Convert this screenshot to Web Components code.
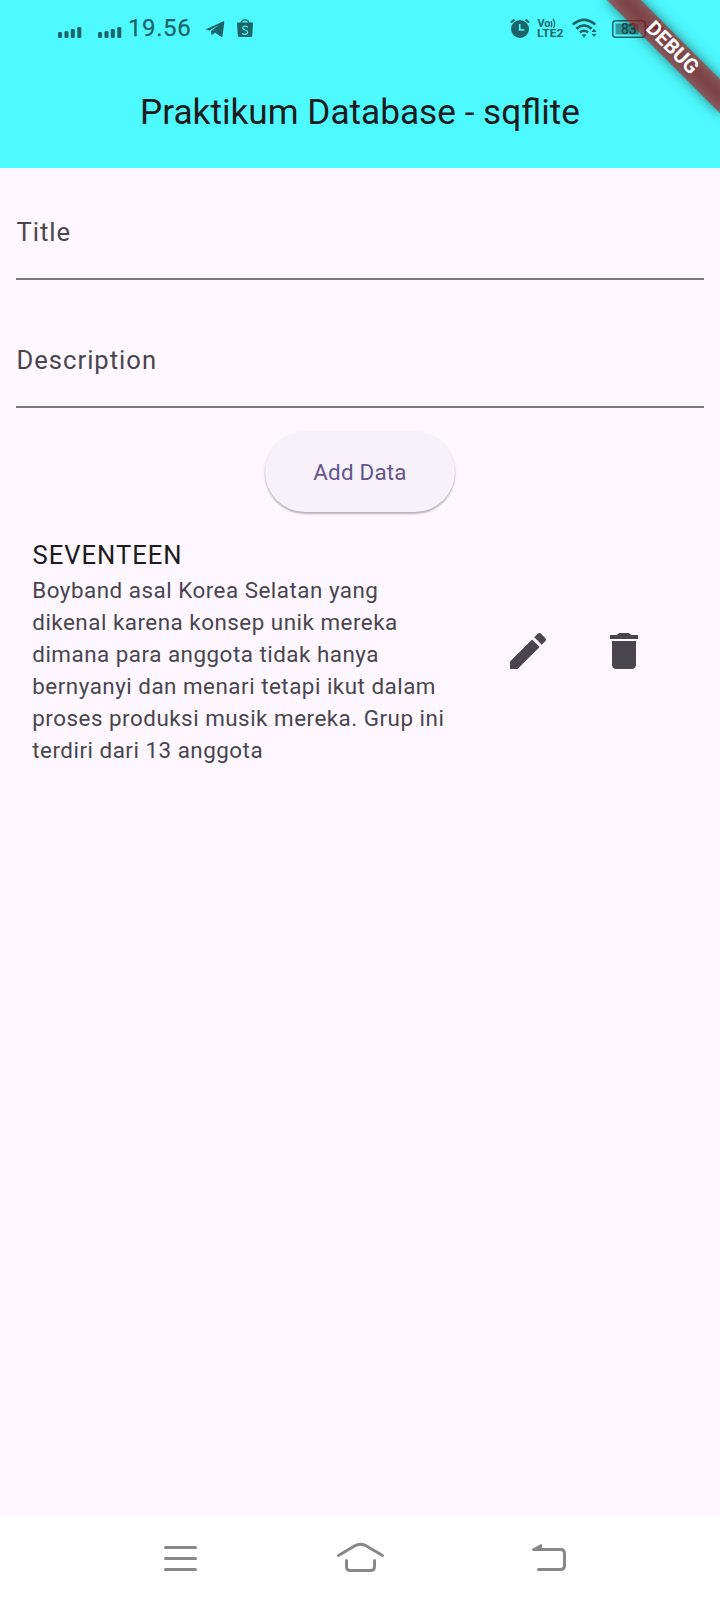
<!DOCTYPE html>
<html lang="id">
<head>
<meta charset="utf-8">
<title>Praktikum Database - sqflite</title>
<style>
html,body{margin:0;height:100%}
body{font-family:Roboto,"Noto Sans",sans-serif;overflow:hidden;background:#fef7ff}
</style>
</head>
<body>
<phone-screen></phone-screen>
<script>
function define(name, html) {
  const t = document.createElement('template');
  t.innerHTML = html;
  customElements.define(name, class extends HTMLElement {
    constructor() {
      super();
      this.attachShadow({ mode: 'open' }).appendChild(t.content.cloneNode(true));
    }
  });
}

define('status-bar', `
<style>
:host{display:flex;height:56px;box-sizing:border-box;align-items:center;color:#1b6468;padding:0 0 0 58px}
svg{display:block;fill:currentColor;flex:none}
.time{font:400 24px/58px Roboto,sans-serif;letter-spacing:.6px;margin-left:6px;width:72px;-webkit-text-stroke:.25px currentColor}
.gap{flex:1}
</style>
<svg width="24" height="56" viewBox="0 0 24 56"><rect x="0" y="32" width="4" height="6" rx="1.3"/><rect x="6.500" y="31" width="4" height="7" rx="1.3"/><rect x="12.800" y="29" width="4" height="9" rx="1.3"/><rect x="19.300" y="27" width="4" height="11" rx="1.3"/></svg>
<svg style="margin-left:16px" width="24" height="56" viewBox="0 0 24 56"><rect x="0" y="32" width="4" height="6" rx="1.3"/><rect x="6.500" y="31" width="4" height="7" rx="1.3"/><rect x="12.800" y="29" width="4" height="9" rx="1.3"/><rect x="19.300" y="27" width="4" height="11" rx="1.3"/></svg>
<span class="time">19.56</span>
<svg style="margin-left:5px" width="20" height="56" viewBox="205 0 20 56"><path d="M206 29.300 223.500 21.200Q224.600 21 224.300 22L222.500 36.300Q222 37.500 221 36.800L215 32.500 212.500 34.700Q211.500 35.200 211.300 34L211 31.200 218.500 25 209.500 30.400 206 29.900Z"/></svg>
<svg style="margin-left:11px" width="18" height="56" viewBox="236 0 18 56"><path d="M237 22.500H253L252.300 35.500Q252 37 250.800 37H239.300Q238 37 237.800 35.500Z"/><path d="M241 24C241 18.500 249 18.500 249 24" fill="none" stroke="currentColor" stroke-width="1.200"/><path d="M247.700 27.300C246 25.500 242.500 26 242.700 28.100C243 30.300 247.700 29.700 247.700 32.300C247.500 35 243.700 34.800 242 33.200" fill="none" stroke="#4dfaff" stroke-width="1.200"/></svg>
<span class="gap"></span>
<svg width="20" height="56" viewBox="510 0 20 56"><circle cx="520" cy="29" r="9"/><path d="M511 22.500 514.500 19.500M529 22.500 525.500 19.500" stroke="currentColor" stroke-width="2"/><path d="M519.700 24V30H524.500" fill="none" stroke="#4dfaff" stroke-width="1.700"/></svg>
<volte-mark></volte-mark>
<svg width="26" height="56" viewBox="572 0 26 56"><g fill="none" stroke="currentColor" stroke-width="2.500"><path d="M572.800 24.500Q584 15.300 595.300 24.500"/><path d="M576.300 28.700Q584 22 591.700 28.700"/><path d="M580 32.500Q584 29 588 32.500"/></g><path d="M581.500 34.800Q584 33.500 586.500 34.800L584 37.500ZM591.500 32 594 28.700 596.500 32ZM591.500 33.700H596.500L594 37Z"/></svg>
<battery-mark></battery-mark>`);

define('volte-mark', `
<style>
:host{display:block;width:27px;height:56px;margin:0 8px 0 7px}
svg{display:block;fill:currentColor}
text{font-family:Roboto,sans-serif;font-weight:700}
</style>
<svg width="27" height="56" viewBox="537 0 27 56"><text x="537.500" y="27.300" font-size="10" font-weight="500" textLength="13" lengthAdjust="spacingAndGlyphs">Vo</text><text x="537" y="36.800" font-size="10.800" textLength="26.500" lengthAdjust="spacingAndGlyphs">LTE2</text><path d="M551 21Q552.700 24 551 27.300M553 19Q556.300 23.500 553.300 28" fill="none" stroke="currentColor" stroke-width="1.300"/></svg>`);

define('battery-mark', `
<style>
:host{display:block;width:108px;height:56px;margin-left:14px}
svg{display:block}
text{font:400 15px Roboto,sans-serif}
</style>
<svg width="108" height="56" viewBox="612 0 108 56"><rect x="612.700" y="20.700" width="32.500" height="16.600" rx="3" fill="none" stroke="#1b6468" stroke-width="1.500"/><rect x="615.500" y="23.500" width="23" height="11" rx="1" fill="#2f9da1"/><path d="M647 26Q649 29 647 32" fill="none" stroke="#1b6468" stroke-width="1.500"/><path d="M660.500 20 653 29H657V36L664 27H659.500Z" fill="#173f42"/><text x="621" y="34.300" fill="#124d50" stroke="#124d50" stroke-width=".3" textLength="15.500" lengthAdjust="spacingAndGlyphs">83</text></svg>`);

define('debug-banner', `
<style>
:host{position:absolute;top:0;right:0;width:160px;height:160px;overflow:hidden;pointer-events:none}
.b,.s{position:absolute;left:80px;top:56px;width:160px;height:24px;transform-origin:80px -56px;transform:rotate(45deg)}
.s{background:rgba(0,0,0,.5);filter:blur(6.5px)}
.b{background:rgba(183,28,28,.6);color:#fff;text-align:center;font:700 20.400px/23px Roboto,sans-serif}
</style>
<div class="s"></div><div class="b"><slot></slot></div>`);

define('app-header', `
<style>
:host{display:block;height:168px;background:#4dfaff}
h1{margin:0;height:112px;display:flex;align-items:center;justify-content:center;font:400 35.200px/44px Roboto,sans-serif;color:#1d1b20}
</style>
<status-bar></status-bar><h1><slot></slot></h1>`);

define('text-field', `
<style>
:host{display:flex;height:128px;box-sizing:border-box;align-items:center;border-bottom:2px solid #7c7780;color:#49454f;font-size:25.600px;letter-spacing:1px;padding-left:.5px}
</style>
<span><slot></slot></span>`);

define('pill-button', `
<style>
:host{display:flex;justify-content:center;margin-top:24px}
button{border:0;width:190px;height:80px;border-radius:40px;background:#f7f2fa;color:#65558f;font:400 22.400px/32px Roboto,sans-serif;letter-spacing:.2px;padding:0;box-shadow:0 2px 2px rgba(0,0,0,.22),0 1px 3px rgba(0,0,0,.12)}
</style>
<button><slot></slot></button>`);

define('list-item', `
<style>
:host{display:flex;padding:0 32px;align-items:center;color:#49454f}
.t{width:424px}
h2{margin:0;padding-left:.5px;font:400 25.600px/38px Roboto,sans-serif;letter-spacing:1px;color:#1d1b20}
p{margin:0;padding-left:.3px;font-size:22.400px;line-height:32px;letter-spacing:.5px}
.a{flex:1;display:flex}
svg{display:block;width:48px;height:48px;fill:#49454f;padding:24px}
</style>
<div class="t"><h2><slot name="title"></slot></h2><p><slot></slot></p></div>
<div class="a">
<svg style="margin-left:24px" viewBox="0 0 24 24"><path d="M3 17.250V21h3.750L17.810 9.940l-3.750-3.750L3 17.250zM20.710 7.040c.39-.39.39-1.020 0-1.410l-2.340-2.340c-.39-.39-1.020-.39-1.410 0l-1.830 1.830 3.750 3.750 1.830-1.830z"/></svg>
<svg viewBox="0 0 24 24"><path d="M6 19c0 1.100.9 2 2 2h8c1.100 0 2-.9 2-2V7H6v12zM19 4h-3.500l-1-1h-5l-1 1H5v2h14V4z"/></svg>
</div>`);

define('nav-bar', `
<style>
:host{display:flex;justify-content:space-between;height:84px;background:#fff;padding:0 145px 0 155px}
svg{display:block;fill:none;stroke:#888;stroke-width:3;stroke-linecap:round}
</style>
<svg width="50" height="84" viewBox="155 1516 50 84"><path d="M165.500 1547.500H195.500M165.500 1558.500H195.500M165.500 1569.500H195.500"/></svg>
<svg width="50" height="84" viewBox="340 1516 50 84"><path d="M338.500 1555.500 354.500 1546Q360.500 1542.500 366.500 1546L382.500 1555.500M346.500 1560.500V1566.500Q346.500 1570.500 350.500 1570.500H370.500Q374.500 1570.500 374.500 1566.500V1560.500" overflow="visible"/></svg>
<svg width="50" height="84" viewBox="525 1516 50 84"><path d="M538.500 1569.500H560.500Q564.500 1569.500 564.500 1565.500V1553.500Q564.500 1549.500 560.500 1549.500H534"/><path d="M533 1549.500 541 1545V1549.500Z" stroke-width="2" fill="#888" stroke-linejoin="round"/></svg>
<style>svg{overflow:visible}</style>`);

define('phone-screen', `
<style>
:host{display:flex;flex-direction:column;position:relative;width:720px;height:1600px;background:#fef7ff;overflow:hidden}
form{margin:0;padding:0 16px}
text-field:first-child{height:112px;padding-top:18px}
text-field:nth-child(2){padding-top:34px}
list-item{margin-top:24px}
nav-bar{margin-top:auto}
</style>
<app-header>Praktikum Database - sqflite</app-header>
<form><text-field>Title</text-field><text-field>Description</text-field><pill-button>Add Data</pill-button></form>
<list-item><span slot="title">SEVENTEEN</span>Boyband asal Korea Selatan yang dikenal karena konsep unik mereka dimana para anggota tidak hanya bernyanyi dan menari tetapi ikut dalam proses produksi musik mereka. Grup ini terdiri dari 13 anggota</list-item>
<nav-bar></nav-bar>
<debug-banner>DEBUG</debug-banner>`);
</script>
</body>
</html>
